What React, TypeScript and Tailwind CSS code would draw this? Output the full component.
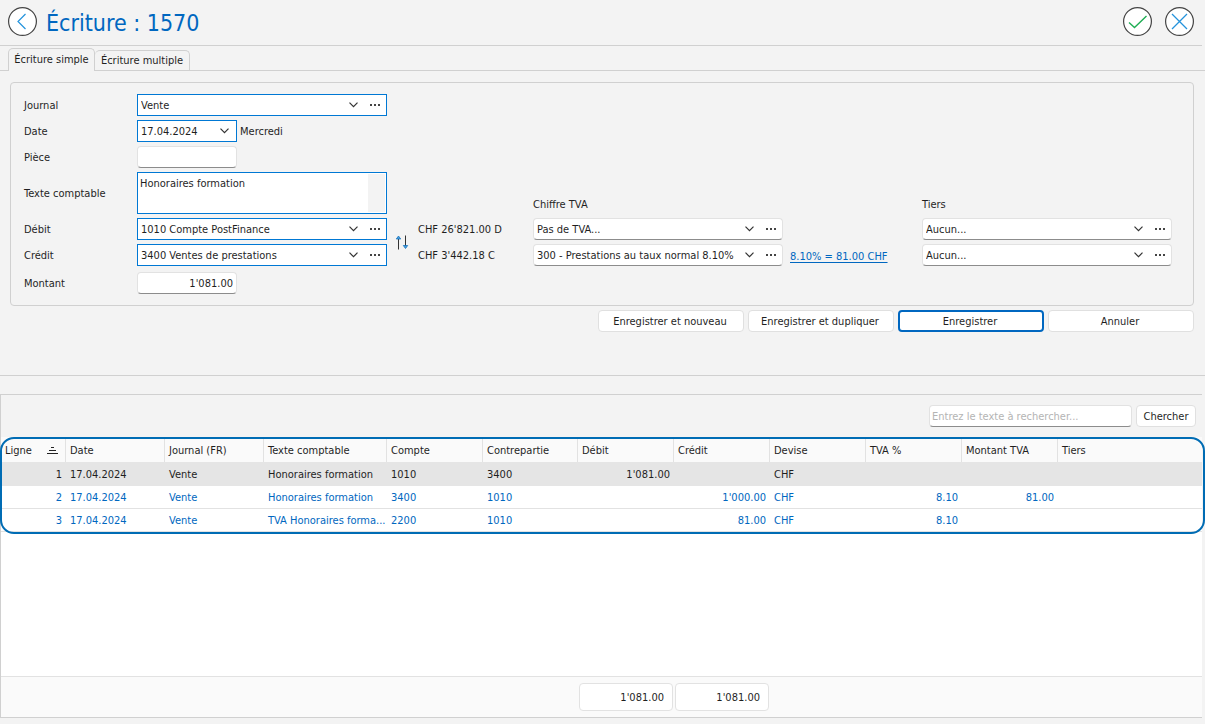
import { ReactNode } from 'react'
import { clsx } from 'clsx'

interface Line {
  id: number
  date: string
  journal: string
  text: string
  account: string
  contra: string
  debit?: string
  credit?: string
  currency: string
  vatRate?: string
  vatAmount?: string
  thirdParty?: string
}

const LINES: Line[] = [
  { id: 1, date: '17.04.2024', journal: 'Vente', text: 'Honoraires formation', account: '1010', contra: '3400', debit: "1'081.00", currency: 'CHF' },
  { id: 2, date: '17.04.2024', journal: 'Vente', text: 'Honoraires formation', account: '3400', contra: '1010', credit: "1'000.00", currency: 'CHF', vatRate: '8.10', vatAmount: '81.00' },
  { id: 3, date: '17.04.2024', journal: 'Vente', text: 'TVA Honoraires forma...', account: '2200', contra: '1010', credit: '81.00', currency: 'CHF', vatRate: '8.10' },
]

const COLUMNS: { key: keyof Line; label: string; width: string; right?: boolean }[] = [
  { key: 'id', label: 'Ligne', width: 'w-[65px]', right: true },
  { key: 'date', label: 'Date', width: 'w-[99px]' },
  { key: 'journal', label: 'Journal (FR)', width: 'w-[99px]' },
  { key: 'text', label: 'Texte comptable', width: 'w-[123px]' },
  { key: 'account', label: 'Compte', width: 'w-[96px]' },
  { key: 'contra', label: 'Contrepartie', width: 'w-[95px]' },
  { key: 'debit', label: 'Débit', width: 'w-[96px]', right: true },
  { key: 'credit', label: 'Crédit', width: 'w-[96px]', right: true },
  { key: 'currency', label: 'Devise', width: 'w-[96px]' },
  { key: 'vatRate', label: 'TVA %', width: 'w-[96px]', right: true },
  { key: 'vatAmount', label: 'Montant TVA', width: 'w-[96px]', right: true },
  { key: 'thirdParty', label: 'Tiers', width: 'w-auto' },
]

const softField = 'rounded border border-[#e2e2e2] border-b-[#8c8c8c] bg-white'
const requiredField = 'border border-[#0078d4] bg-white'

function Chevron() {
  return (
    <svg className="pointer-events-none absolute right-0 top-1/2 -translate-y-1/2" width="9" height="6" viewBox="0 0 9 6" fill="none" stroke="#333" strokeWidth="1.2">
      <path d="M0.5 0.7 4.5 4.7 8.5 0.7" />
    </svg>
  )
}

function Combo({ id, value, label, required, more = true }: {
  id: string
  value: string
  label?: string
  required?: boolean
  more?: boolean
}) {
  return (
    <div className={clsx('flex h-[22px] items-center', more ? 'w-full' : 'w-[100px] pr-[7px]', required ? requiredField : softField)}>
      <div className="relative h-full min-w-0 flex-1">
        <select id={id} aria-label={label} defaultValue={value} className="h-full w-full appearance-none bg-transparent pl-[3px] pr-3 pt-0.5 outline-none">
          <option>{value}</option>
        </select>
        <Chevron />
      </div>
      {more && (
        <button type="button" aria-label="Plus d'options" className="flex h-full w-7 items-center justify-end pr-[5px]">
          <svg width="11" height="2" viewBox="0 0 11 2" fill="#444">
            <rect width="2" height="2" />
            <rect x="4" width="2" height="2" />
            <rect x="8" width="2" height="2" />
          </svg>
        </button>
      )}
    </div>
  )
}

function RoundButton({ label, children }: { label: string; children: ReactNode }) {
  return (
    <button type="button" aria-label={label} className="size-[29px] shrink-0">
      <svg width="29" height="29" viewBox="0 0 29 29" fill="none">
        <circle cx="14.5" cy="14.5" r="13.9" fill="#fff" stroke="#444" strokeWidth="1.2" />
        {children}
      </svg>
    </button>
  )
}

function ActionButton({ children, primary }: { children: ReactNode; primary?: boolean }) {
  return (
    <button
      type="button"
      className={clsx('h-[22px] w-[146px] rounded bg-white pr-0.5 pt-0.5', primary ? 'border-2 border-[#0067c0]' : 'border border-[#e0e0e0]')}
    >
      {children}
    </button>
  )
}

function EntryForm() {
  return (
    <form className="ml-[10px] mr-[11px] mt-[11px] grid grid-cols-[113px_250px_31px_115px_250px_1fr_250px] grid-rows-[22px_22px_22px_42px_22px_22px_24px] items-center gap-y-1 rounded border border-[#d0d0d0] py-[11px] pl-[13px] pr-[21px] [&>label]:pt-0.5">
      <label htmlFor="journal" className="col-start-1">Journal</label>
      <Combo id="journal" value="Vente" required />

      <label htmlFor="date" className="col-start-1">Date</label>
      <div className="flex items-center gap-[3px]">
        <Combo id="date" value="17.04.2024" required more={false} />
        <span className="pt-0.5">Mercredi</span>
      </div>

      <label htmlFor="piece" className="col-start-1">Pièce</label>
      <input id="piece" className={clsx('h-[22px] w-[100px] px-1', softField)} />

      <label htmlFor="texte" className="col-start-1">Texte comptable</label>
      <div className={clsx('flex h-[42px] p-px', requiredField)}>
        <textarea id="texte" defaultValue="Honoraires formation" className="h-full flex-1 resize-none px-px pt-0.5 leading-4 outline-none" />
        <div className="w-[17px] bg-[#f3f3f3]" />
      </div>
      <span className="col-start-5 self-end leading-[18px]">Chiffre TVA</span>
      <span className="col-start-7 self-end leading-[18px]">Tiers</span>

      <label htmlFor="debit" className="col-start-1">Débit</label>
      <Combo id="debit" value="1010 Compte PostFinance" required />
      <button type="button" aria-label="Inverser débit et crédit" className="row-span-2 justify-self-center">
        <svg width="13" height="15" viewBox="0 0 13 15" fill="none">
          <path d="M2.5 3v11.5M9.5 0.5V11" stroke="#333" strokeWidth="1" />
          <path d="M0.3 4 2.5 1 4.7 4ZM7.3 10.5 9.5 13.5 11.7 10.5Z" fill="#4a9fe0" stroke="#1673bd" strokeWidth="0.8" />
        </svg>
      </button>
      <span className="pt-0.5">CHF 26'821.00 D</span>
      <Combo id="tva-debit" label="Chiffre TVA débit" value="Pas de TVA..." />
      <div className="col-start-7">
        <Combo id="tiers-debit" label="Tiers débit" value="Aucun..." />
      </div>

      <label htmlFor="credit" className="col-start-1">Crédit</label>
      <Combo id="credit" value="3400 Ventes de prestations" required />
      <span className="col-start-4 pt-0.5">CHF 3'442.18 C</span>
      <Combo id="tva-credit" label="Chiffre TVA crédit" value="300 - Prestations au taux normal 8.10%" />
      <a href="#tva" className="pl-[7px] pt-1 text-[#0067c0] underline underline-offset-2">8.10% = 81.00 CHF</a>
      <Combo id="tiers-credit" label="Tiers crédit" value="Aucun..." />

      <label htmlFor="montant" className="col-start-1 self-end leading-5">Montant</label>
      <input id="montant" defaultValue="1'081.00" className={clsx('h-[22px] w-[100px] self-end px-[3px] text-right', softField)} />
    </form>
  )
}

function LinesTable() {
  return (
    <div className="relative">
      <table className="w-full table-fixed border-separate border-spacing-0">
        <thead>
          <tr className="h-[25px] bg-[#fafafa]">
            {COLUMNS.map((col, i) => (
              <th key={col.key} className={clsx('px-1 pb-0 pt-0.5 text-left font-normal', col.width, i < COLUMNS.length - 1 && 'border-r border-[#e2e2e2]')}>
                <div className="flex items-center justify-between">
                  {col.label}
                  {col.key === 'id' && (
                    <svg className="mr-[3px]" width="11" height="8" viewBox="0 0 11 8" fill="#222">
                      <rect x="4" width="3" height="1" />
                      <rect x="2" y="3" width="7" height="1" />
                      <rect y="6" width="11" height="1" />
                    </svg>
                  )}
                </div>
              </th>
            ))}
          </tr>
        </thead>
        <tbody>
          {LINES.map((line) => (
            <tr key={line.id} className={line.id === 1 ? 'h-6 bg-[#e5e5e5]' : 'h-[23px] bg-white text-[#0067c0]'}>
              {COLUMNS.map((col) => (
                <td
                  key={col.key}
                  className={clsx('whitespace-nowrap px-1 pb-0 pt-0.5', col.right && 'text-right', line.id !== 1 && 'border-b border-[#e2e2e2]')}
                >
                  {line[col.key]}
                </td>
              ))}
            </tr>
          ))}
        </tbody>
      </table>
      {/* cadre bleu autour des lignes */}
      <div className="pointer-events-none absolute -left-px -right-[3px] -bottom-0.5 top-0 rounded-[14px] border-2 border-[#006cb4]" />
    </div>
  )
}

export default function App() {
  return (
    <div className="flex min-h-screen flex-col overflow-x-hidden bg-[#f3f3f3] pb-1.5 font-['DejaVu_Sans_Condensed','Noto_Sans',sans-serif] text-[11px] leading-4 text-[#1f1f1f]">
      <header className="mr-[3px] flex h-[46px] items-center gap-[9px] border-b border-[#d0d0d0] pb-0.5 pl-2 pr-2">
        <RoundButton label="Retour">
          <path d="M17.5 7 10 14.5 17.5 22" stroke="#2493dc" strokeWidth="1.2" />
        </RoundButton>
        <h1 className="flex-1 pt-0.5 text-[23px] leading-8 text-[#0067c0]">Écriture : 1570</h1>
        <div className="flex gap-[13px]">
          <RoundButton label="Valider">
            <path d="M6 15.5 11.5 20.5 23.5 9" stroke="#1fae54" strokeWidth="1.4" />
          </RoundButton>
          <RoundButton label="Fermer">
            <path d="M7 7 22 22M22 7 7 22" stroke="#2493dc" strokeWidth="1.3" />
          </RoundButton>
        </div>
      </header>

      <div role="tablist" className="flex h-[25px] items-end border-b border-[#d0d0d0] pl-2">
        <button type="button" role="tab" aria-selected="true" className="-mb-px h-[23px] w-[87px] rounded-t-[5px] border border-b-0 border-[#d0d0d0] bg-[#f3f3f3]">
          Écriture simple
        </button>
        <button type="button" role="tab" aria-selected="false" className="h-5 w-[95px] rounded-t-[5px] rounded-bl-[5px] border border-b-0 border-l-0 border-[#d0d0d0]">
          Écriture multiple
        </button>
      </div>

      <EntryForm />

      <div className="mr-[11px] mt-1 flex justify-end gap-1">
        <ActionButton>Enregistrer et nouveau</ActionButton>
        <ActionButton>Enregistrer et dupliquer</ActionButton>
        <ActionButton primary>Enregistrer</ActionButton>
        <ActionButton>Annuler</ActionButton>
      </div>

      <hr className="mt-[43px] border-[#d0d0d0]" />

      <section className="mr-[3px] mt-[18px] flex flex-1 flex-col border border-r-0 border-[#d0d0d0] bg-white">
        <div className="flex justify-end gap-1 bg-[#f3f3f3] pb-[10px] pr-[6px] pt-[10px]">
          <input type="search" aria-label="Rechercher" placeholder="Entrez le texte à rechercher..." className={clsx('h-[22px] w-[203px] px-0.5 placeholder:text-[#b4b4b4]', softField)} />
          <button type="button" className="h-[22px] w-[60px] rounded border border-[#e0e0e0] bg-white pt-0.5">Chercher</button>
        </div>
        <LinesTable />
        <footer className="mt-auto flex h-[41px] items-center gap-0.5 border-t border-[#e2e2e2] bg-[#fafafa] pl-[578px]">
          <input readOnly aria-label="Total débit" value="1'081.00" className="h-7 w-[94px] rounded border border-[#e2e2e2] bg-white px-2 text-right" />
          <input readOnly aria-label="Total crédit" value="1'081.00" className="h-7 w-[94px] rounded border border-[#e2e2e2] bg-white px-2 text-right" />
        </footer>
      </section>
    </div>
  )
}
